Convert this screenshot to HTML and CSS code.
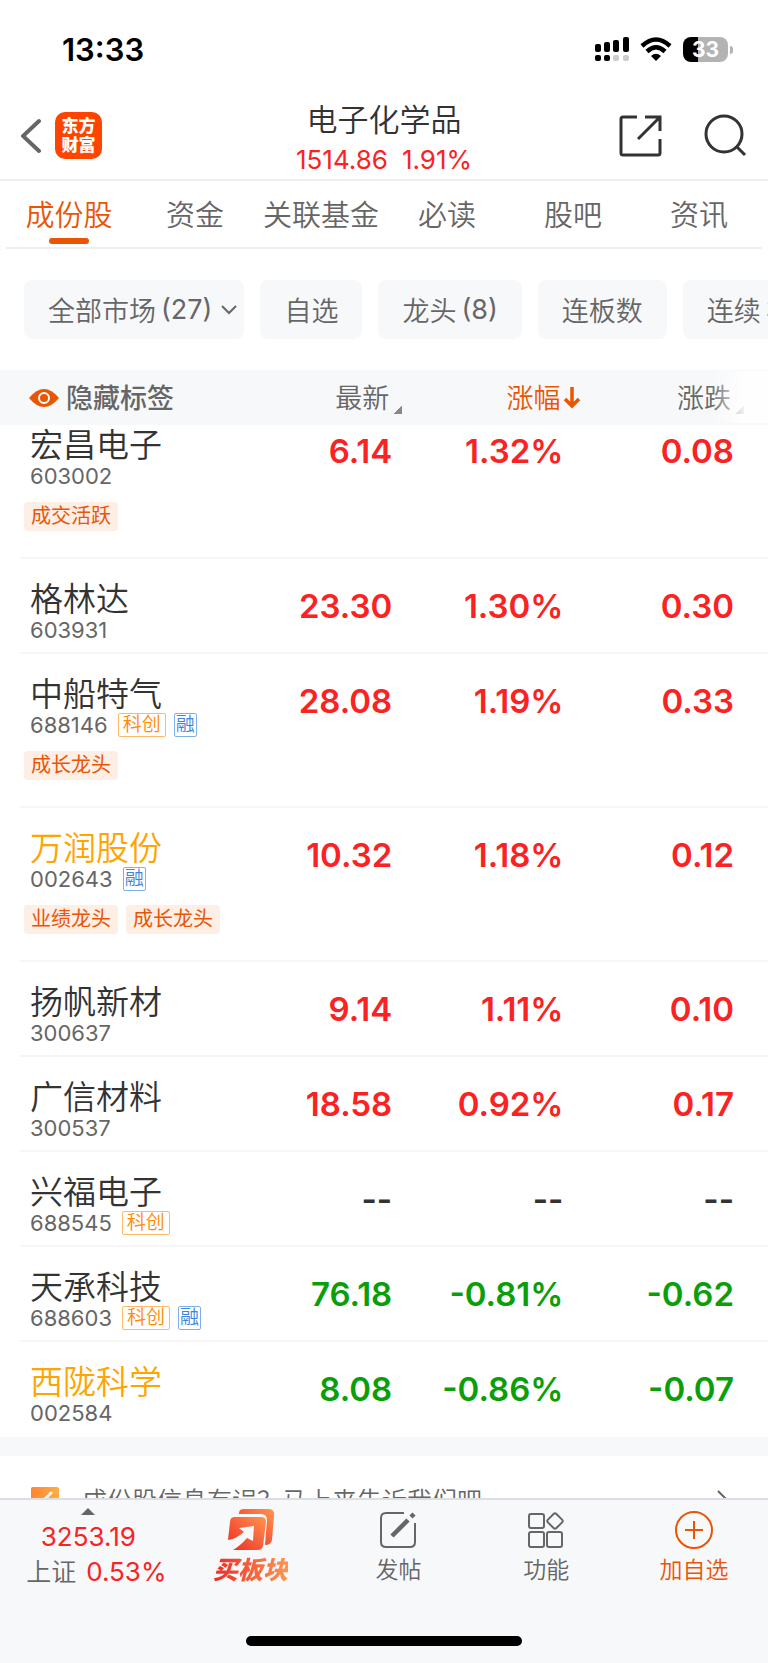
FILE: index.html
```html
<!DOCTYPE html>
<html lang="zh-CN">
<head>
  <meta charset="UTF-8">
  <meta name="viewport" content="width=device-width, initial-scale=1">
  <title>电子化学品</title>
  <link rel="stylesheet" href="styles.css">
</head>
<body>
  <div class="status-bar">
    <span class="clock">13:33</span>
    <div class="status-icons">
      <svg width="34" height="26" viewBox="0 0 34 26">
        <rect x="0" y="8" width="6" height="8" rx="2"/>
        <rect x="9" y="6" width="6" height="10" rx="2"/>
        <rect x="18" y="4" width="6" height="12" rx="2"/>
        <rect x="28" y="1" width="6" height="15" rx="2"/>
        <rect x="0" y="19" width="6" height="6" rx="2"/>
        <rect x="9" y="19" width="6" height="6" rx="2"/>
        <rect x="18" y="19" width="6" height="6" rx="2" fill="#ccc"/>
        <rect x="28" y="19" width="6" height="6" rx="2" fill="#ccc"/>
      </svg>
      <svg width="32" height="24" viewBox="0 0 32 24">
        <path d="M2 9Q16 -4 30 9" fill="none" stroke="#000" stroke-width="4.500"/>
        <path d="M7 14.500Q16 6 25 14.500" fill="none" stroke="#000" stroke-width="4.500"/>
        <path d="M11 19Q16 14.500 21 19L16 24Z"/>
      </svg>
      <div class="battery"><span>33</span></div>
    </div>
  </div>

  <header class="top-bar">
    <div class="top-left">
      <button aria-label="返回">
        <svg width="22" height="36" viewBox="0 0 22 36"><path d="M18 3L2 18L18 33" fill="none" stroke="#666" stroke-width="4" stroke-linecap="round"/></svg>
      </button>
      <a class="logo" href="#">东方<br>财富</a>
    </div>
    <div class="title">
      <h1>电子化学品</h1>
      <p><span>1514.86</span><span>1.91%</span></p>
    </div>
    <div class="top-right">
      <button aria-label="分享">
        <svg width="44" height="44" viewBox="0 0 44 44" fill="none" stroke="#333" stroke-width="3">
          <path d="M18 3H4Q2 3 2 5V39Q2 41 4 41H39Q41 41 41 39V25"/>
          <path d="M26 3H41V17M40 4L19 25"/>
        </svg>
      </button>
      <button aria-label="搜索">
        <svg width="44" height="44" viewBox="0 0 44 44" fill="none" stroke="#333" stroke-width="3">
          <circle cx="21" cy="20" r="18"/><path d="M33 32L42 41"/>
        </svg>
      </button>
    </div>
  </header>

  <nav class="tabs">
    <a class="active" href="#">成份股</a>
    <a href="#">资金</a>
    <a href="#">关联基金</a>
    <a href="#">必读</a>
    <a href="#">股吧</a>
    <a href="#">资讯</a>
  </nav>

  <main class="content">
    <div class="filters">
      <button class="market">全部市场<span>(27)</span>
        <svg width="16" height="12" viewBox="0 0 16 12"><path d="M1 2L8 9L15 2" fill="none" stroke="#666" stroke-width="2"/></svg>
      </button>
      <button>自选</button>
      <button>龙头<span>(8)</span></button>
      <button>连板数</button>
      <button>连续<span>3</span></button>
    </div>

    <div class="list">
      <table>
        <thead>
          <tr>
            <th class="col-name">
              <button class="toggle">
                <svg width="30" height="20" viewBox="0 0 30 20"><path d="M0 9Q15 -9 30 9Q15 27 0 9Z" fill="#ea5504"/><circle cx="15" cy="9" r="5" fill="#ea5504" stroke="#fff" stroke-width="2"/></svg>
                隐藏标签
              </button>
            </th>
            <th><button>最新<span class="mark"><i></i></span></button></th>
            <th><button class="sorted">涨幅<span class="mark"><svg width="16" height="24" viewBox="0 0 16 24"><path d="M8 0V19M1 12L8 19L15 12" fill="none" stroke="#ea5504" stroke-width="3.500"/></svg></span></button></th>
            <th class="col-last"><button>涨跌<span class="mark"><i></i></span></button></th>
          </tr>
        </thead>
        <tbody>
          <tr class="first up">
            <td><h2>宏昌电子</h2><div class="code">603002</div><div class="tags"><span>成交活跃</span></div></td>
            <td>6.14</td><td>1.32%</td><td>0.08</td>
          </tr>
          <tr class="up">
            <td><h2>格林达</h2><div class="code">603931</div></td>
            <td>23.30</td><td>1.30%</td><td>0.30</td>
          </tr>
          <tr class="up">
            <td><h2>中船特气</h2><div class="code">688146<b class="kc">科创</b><b class="rong">融</b></div><div class="tags"><span>成长龙头</span></div></td>
            <td>28.08</td><td>1.19%</td><td>0.33</td>
          </tr>
          <tr class="up">
            <td><h2 class="own">万润股份</h2><div class="code">002643<b class="rong">融</b></div><div class="tags"><span>业绩龙头</span><span>成长龙头</span></div></td>
            <td>10.32</td><td>1.18%</td><td>0.12</td>
          </tr>
          <tr class="up">
            <td><h2>扬帆新材</h2><div class="code">300637</div></td>
            <td>9.14</td><td>1.11%</td><td>0.10</td>
          </tr>
          <tr class="up">
            <td><h2>广信材料</h2><div class="code">300537</div></td>
            <td>18.58</td><td>0.92%</td><td>0.17</td>
          </tr>
          <tr>
            <td><h2>兴福电子</h2><div class="code">688545<b class="kc">科创</b></div></td>
            <td>--</td><td>--</td><td>--</td>
          </tr>
          <tr class="down">
            <td><h2>天承科技</h2><div class="code">688603<b class="kc">科创</b><b class="rong">融</b></div></td>
            <td>76.18</td><td>-0.81%</td><td>-0.62</td>
          </tr>
          <tr class="down">
            <td><h2 class="own">西陇科学</h2><div class="code">002584</div></td>
            <td>8.08</td><td>-0.86%</td><td>-0.07</td>
          </tr>
        </tbody>
      </table>
    </div>

    <a class="feedback" href="#">
      <svg width="28" height="28" viewBox="0 0 28 28">
        <defs><linearGradient id="fb"><stop stop-color="#ff8534"/><stop offset="1" stop-color="#ffae42"/></linearGradient></defs>
        <rect width="28" height="28" rx="2" fill="url(#fb)"/>
        <path d="M9 17L17 9M19 7L20 6" stroke="#fff" stroke-width="3" stroke-linecap="round"/>
      </svg>
      <span>成份股信息有误？马上来告诉我们吧</span>
      <svg width="12" height="22" viewBox="0 0 12 22"><path d="M1 1L11 11L1 21" fill="none" stroke="#666" stroke-width="2"/></svg>
    </a>
  </main>

  <footer class="bottom-bar">
    <div class="actions">
      <button class="index">
        <i class="caret"></i>
        <span class="point">3253.19</span>
        <span class="change">上证<em>0.53%</em></span>
      </button>
      <button class="buy">
        <svg width="48" height="44" viewBox="0 0 48 44">
          <defs><linearGradient id="buy" x1="0" y1="1" x2="1" y2="0"><stop stop-color="#ee2a24"/><stop offset="1" stop-color="#ff9550"/></linearGradient></defs>
          <path d="M12 5Q12 1 17 1H41Q48 1 47 8L45 32Q44 37 38 37L40 12Q40 6 34 6H12Z" fill="url(#buy)"/>
          <path d="M8 9H34Q39 9 39 14L36 38Q35 42 31 42H6Q13 38 20 30L26 33L27 18L12 20L17 24Q9 31 1 32L3 14Q3 9 8 9Z" fill="url(#buy)"/>
        </svg>
        <span>买板块</span>
      </button>
      <button>
        <svg width="38" height="38" viewBox="0 0 38 38" fill="none" stroke="#666" stroke-width="2">
          <path d="M25 2H7Q2 2 2 7V31Q2 36 7 36H31Q36 36 36 31V12"/>
          <path d="M13 25L29 9M32 6L35 3" stroke-width="4.500"/>
        </svg>
        <span>发帖</span>
      </button>
      <button>
        <svg width="38" height="38" viewBox="0 0 38 38" fill="none" stroke="#666" stroke-width="2">
          <rect x="2" y="3" width="15" height="14" rx="2"/>
          <rect x="2" y="21" width="15" height="15" rx="2"/>
          <rect x="20" y="21" width="15" height="15" rx="2"/>
          <rect x="22" y="4" width="12" height="12" rx="2" transform="rotate(45 28 10)"/>
        </svg>
        <span>功能</span>
      </button>
      <button class="add">
        <svg width="38" height="38" viewBox="0 0 38 38" fill="none" stroke="#ea5504" stroke-width="2">
          <circle cx="19" cy="19" r="18"/><path d="M19 10V28M10 19H28"/>
        </svg>
        <span>加自选</span>
      </button>
    </div>
    <div class="home-line"></div>
  </footer>
</body>
</html>
```

FILE: styles.css
```css
* {
  box-sizing: border-box;
}
body {
  margin: 0;
  height: 100vh;
  display: flex;
  flex-direction: column;
  overflow: hidden;
  background: #fff;
  color: #333;
  font-family: Inter, "Noto Sans CJK SC", sans-serif;
}
h1, h2, p {
  margin: 0;
  font-weight: 350;
}
a {
  color: inherit;
  text-decoration: none;
}
button {
  padding: 0;
  border: none;
  background: none;
  color: inherit;
  font: inherit;
  cursor: pointer;
}
svg {
  display: block;
  flex-shrink: 0;
}

/* status bar */
.status-bar {
  display: flex;
  justify-content: space-between;
  align-items: center;
  height: 98px;
  padding: 0 35px 0 62px;
}
.clock {
  font-size: 31px;
  font-weight: 600;
  color: #000;
}
.status-icons {
  display: flex;
  align-items: center;
  gap: 11px;
}
.battery {
  position: relative;
  width: 45px;
  height: 25px;
  margin-right: 5px;
  border-radius: 8px;
  background: linear-gradient(to right, #000 33%, #b3b3b3 33%);
  color: #fff;
  font-size: 21px;
  font-weight: 700;
  line-height: 25px;
  text-align: center;
}
.battery::after {
  content: "";
  position: absolute;
  right: -5px;
  top: 9px;
  width: 3px;
  height: 8px;
  border-radius: 0 4px 4px 0;
  background: #b3b3b3;
}

/* title */
.top-bar {
  display: grid;
  grid-template-columns: 1fr auto 1fr;
  align-items: center;
  height: 83px;
  padding: 0 21px;
  border-bottom: 2px solid #eee;
}
.top-left, .top-right {
  display: flex;
  align-items: center;
  padding-bottom: 6px;
}
.top-left {
  gap: 12px;
}
.top-right {
  justify-content: flex-end;
  gap: 40px;
}
.logo {
  width: 47px;
  height: 47px;
  padding-top: 5px;
  border-radius: 10px;
  background: #ff4400;
  color: #fff;
  font-size: 17px;
  font-weight: 900;
  line-height: 19px;
  text-align: center;
}
.title {
  text-align: center;
}
.title h1 {
  font-size: 31px;
  line-height: 42px;
}
.title p {
  display: flex;
  justify-content: center;
  gap: 14px;
  color: #fa2222;
  font-size: 26px;
  font-weight: 400;
  line-height: 38px;
}

/* tabs */
.tabs {
  display: flex;
  margin: 0 6px;
  border-bottom: 2px solid #eee;
  color: #666;
  font-size: 29px;
  font-weight: 350;
}
.tabs a {
  flex: 1;
  display: flex;
  flex-direction: column;
  align-items: center;
  height: 66px;
  line-height: 70px;
  white-space: nowrap;
}
.tabs .active {
  color: #ea5504;
}
.tabs .active::after {
  content: "";
  width: 40px;
  height: 6px;
  margin-top: -13px;
  border-radius: 3px;
  background: #ea5504;
}

.content {
  flex: 1;
  min-height: 0;
  overflow: hidden;
}

/* filters */
.filters {
  display: flex;
  gap: 16px;
  padding: 31px 0 31px 24px;
  overflow: hidden;
}
.filters button {
  display: flex;
  flex-shrink: 0;
  align-items: center;
  gap: 5px;
  height: 59px;
  padding: 0 24px;
  border-radius: 8px;
  background: #f7f8fa;
  color: #666;
  font-size: 27px;
  font-weight: 350;
}
.filters span {
  font-weight: 400;
}
.filters .market {
  padding-right: 7px;
}
.filters .market svg {
  margin-left: 4px;
}

/* stock list */
.list {
  position: relative;
}
.list::after {
  content: "";
  position: absolute;
  top: 1px;
  right: 0;
  width: 58px;
  height: 52px;
  background: linear-gradient(to right, rgba(255, 255, 255, 0), #fff 60%);
  opacity: 0.9;
  pointer-events: none;
}
table {
  width: 100%;
  table-layout: fixed;
  border-collapse: collapse;
}
th {
  width: 22.3%;
  height: 55px;
  padding: 0;
  background: #f7f8fa;
  color: #666;
  font-size: 27px;
  font-weight: 350;
  text-align: right;
}
.col-name {
  width: 31.9%;
  padding-left: 29px;
  text-align: left;
}
.col-last {
  width: auto;
  padding-right: 10px;
}
th button {
  display: inline-flex;
  align-items: center;
  padding-top: 2px;
  line-height: 53px;
}
.toggle {
  gap: 7px;
  font-weight: 500;
}
.sorted {
  color: #ea5504;
}
.mark {
  width: 27px;
  padding-left: 4px;
}
.mark i {
  display: block;
  margin: 23px 0 0 1px;
  width: 8px;
  height: 8px;
  background: linear-gradient(135deg, transparent 50%, #888 50%);
}
td {
  padding: 25px 24px 0 0;
  vertical-align: top;
  font-size: 33px;
  font-weight: 600;
  line-height: 45px;
  text-align: right;
  white-space: nowrap;
}
td:first-child {
  padding: 20px 0 11px 30px;
  font-weight: 400;
  text-align: left;
}
td:last-child {
  padding-right: 34px;
}
tbody tr {
  background: linear-gradient(#f6f6f8, #f6f6f8) 20px 100% / 100% 2px no-repeat;
}
tbody tr:last-child {
  background: none;
}
.first td {
  padding-top: 4px;
}
.first td:first-child {
  padding-top: 0;
}
.up {
  color: #fa2222;
}
.down {
  color: #0a9f0a;
}
h2 {
  height: 38px;
  color: #333;
  font-size: 33px;
  line-height: 41px;
}
.own {
  color: #ffa400;
}
.code {
  display: flex;
  align-items: center;
  gap: 8px;
  height: 26px;
  color: #666;
  font-size: 22px;
  line-height: 26px;
}
.code b {
  padding: 0 4px;
  border: 1px solid;
  border-radius: 2px;
  font-size: 19px;
  font-weight: 350;
  line-height: 22px;
}
.code b:first-child {
  margin-left: 2px;
}
.code .kc {
  border-color: #ffb866;
  color: #ff8a00;
}
.code .rong {
  padding: 0 1px;
  border-color: #7db1ee;
  color: #3b85e0;
}
.tags {
  display: flex;
  gap: 8px;
  margin: 13px 0 17px -6px;
}
.tags span {
  padding: 0 7px;
  border-radius: 4px;
  background: #fdeee6;
  color: #ea5504;
  font-size: 20px;
  line-height: 29px;
}

/* feedback */
.feedback {
  display: flex;
  align-items: center;
  padding: 31px 39px 0 31px;
  border-top: 19px solid #f7f8fa;
  color: #666;
  font-size: 25px;
  font-weight: 350;
  line-height: 28px;
}
.feedback span {
  flex: 1;
  margin-left: 23px;
}

/* bottom bar */
.bottom-bar {
  height: 165px;
  display: flex;
  flex-direction: column;
  justify-content: space-between;
  align-items: center;
  padding-bottom: 17px;
  border-top: 2px solid #dddee4;
  background: #f7f8fa;
}
.actions {
  display: flex;
  width: 100%;
}
.actions button {
  flex: 1;
  display: flex;
  flex-direction: column;
  align-items: center;
  padding-top: 11px;
  color: #666;
  font-size: 23px;
  font-weight: 350;
}
.actions button span {
  margin-top: 3px;
  line-height: 36px;
  white-space: nowrap;
}
.actions .index {
  flex: 0 0 23%;
  padding: 8px 0 0;
}
.caret {
  border: 7px solid transparent;
  border-top: none;
  border-bottom: 7px solid #666;
}
.actions .index span {
  margin-top: 5px;
  line-height: 34px;
}
.actions .index .change {
  display: flex;
  gap: 10px;
  margin: 1px 0 0 16px;
  font-size: 25px;
}
.index .point, .index em {
  color: #fa2222;
  font-size: 26px;
  font-style: normal;
  font-weight: 400;
}
.actions .buy {
  padding-top: 8px;
}
.actions .buy span {
  margin-top: 0;
  background: linear-gradient(to right, #ee2a24, #ff9550);
  background-clip: text;
  color: transparent;
  font-size: 25px;
  font-style: italic;
  font-weight: 900;
}
.actions .add {
  color: #ea5504;
}
.home-line {
  width: 36%;
  height: 10px;
  border-radius: 5px;
  background: #000;
}
```
